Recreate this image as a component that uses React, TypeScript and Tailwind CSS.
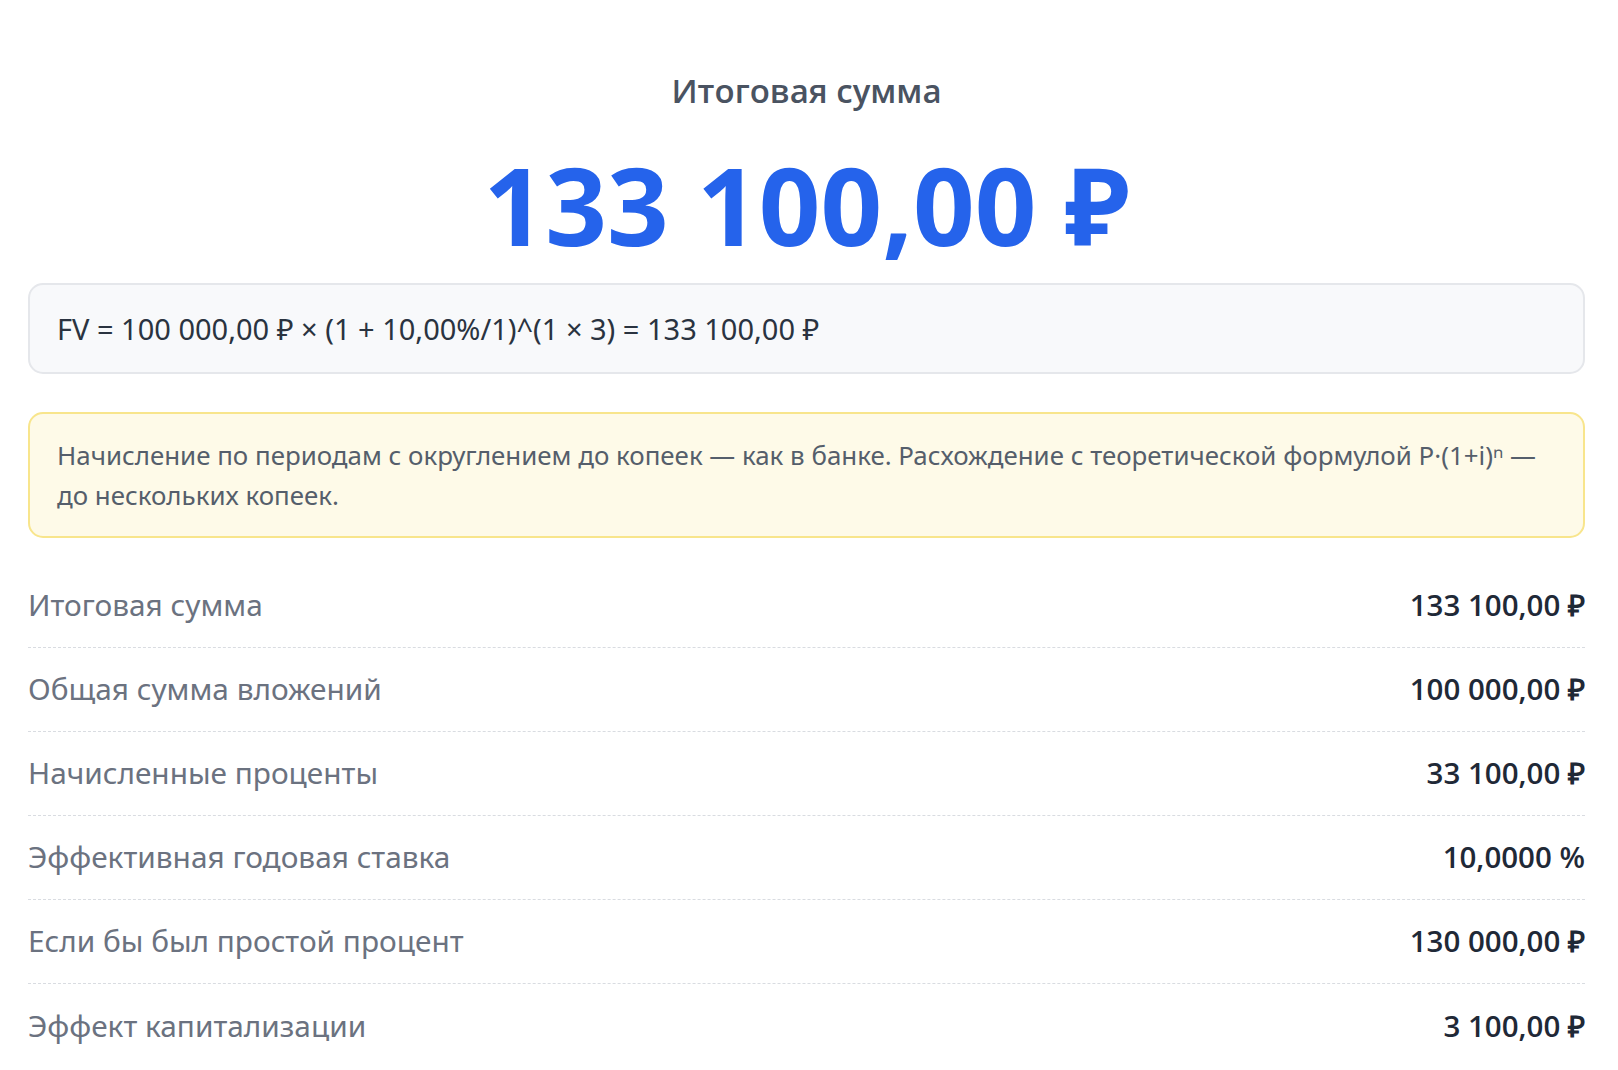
import React from "react";

const rows: { label: string; value: string }[] = [
  { label: "Итоговая сумма", value: "133 100,00 ₽" },
  { label: "Общая сумма вложений", value: "100 000,00 ₽" },
  { label: "Начисленные проценты", value: "33 100,00 ₽" },
  { label: "Эффективная годовая ставка", value: "10,0000 %" },
  { label: "Если бы был простой процент", value: "130 000,00 ₽" },
  { label: "Эффект капитализации", value: "3 100,00 ₽" },
];

export default function App() {
  return (
    <div className="min-h-screen bg-white pl-[28px] pr-[33px] font-['Noto_Sans',sans-serif]">
      <div className="pt-[71px] h-[111px] text-center font-['Open_Sans',sans-serif] text-[33px] leading-[40px] font-semibold text-[#4a5361]">
        Итоговая сумма
      </div>

      <div className="mt-[40px] h-[108px] text-center text-[108px] leading-[108px] font-bold text-[#2563eb]">
        133 100,00 ₽
      </div>

      <div className="mt-[24px] flex h-[91px] items-center rounded-[15px] border-2 border-[#e5e7eb] bg-[#f8f9fb] px-[27px] text-[29px] text-[#2a3340]">
        FV = 100 000,00 ₽ × (1 + 10,00%/1)^(1 × 3) = 133 100,00 ₽
      </div>

      <div className="mt-[38px] rounded-[15px] border-2 border-[#f8e58c] bg-[#fefae8] px-[27px] py-[21px] text-[25.9px] leading-[40px] text-[#555e6b]">
        Начисление по периодам с округлением до копеек — как в банке. Расхождение с теоретической формулой P·(1+i)ⁿ — до нескольких копеек.
      </div>

      <div className="mt-[26px]">
        {rows.map((r, i) => (
          <div
            key={r.label}
            className={
              i < rows.length - 1
                ? "flex h-[84px] items-center justify-between border-b border-dashed border-[#d9dce1]"
                : "flex h-[84px] items-center justify-between"
            }
          >
            <span className="text-[29.8px] text-[#6b7280]">{r.label}</span>
            <span className="font-['Open_Sans',sans-serif] text-[29.5px] font-semibold text-[#1f2937]">{r.value}</span>
          </div>
        ))}
      </div>
    </div>
  );
}
